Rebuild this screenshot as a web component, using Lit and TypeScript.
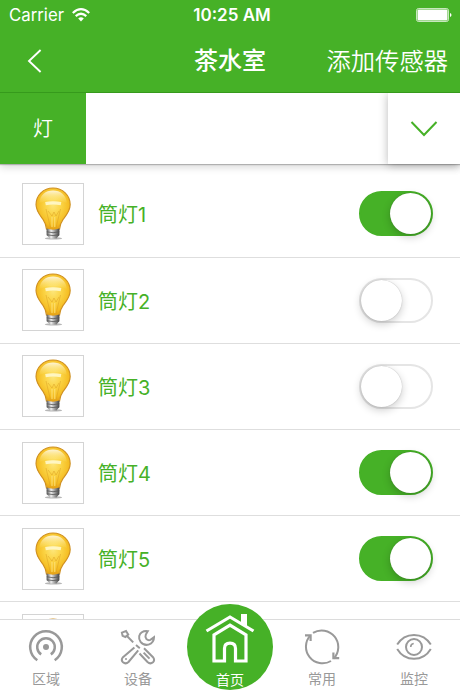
import { LitElement, css, html, svg } from 'lit';
import type { SVGTemplateResult } from 'lit';

interface Lamp {
  name: string;
  on: boolean;
}

interface TabItem {
  label: string;
  icon: SVGTemplateResult;
}

const areaIcon = svg`
  <circle cx="18" cy="18" r="3" fill="currentColor" stroke="none" />
  <path d="M13.2 25.4A8.8 8.8 0 1 1 22.8 25.4" stroke-width="2.5" />
  <path d="M9.3 31.2A15.8 15.8 0 1 1 26.7 31.2" stroke-width="2.5" />
`;

const deviceIcon = svg`
  <path d="M1.9 3.6 6 2 8.2 5.6 5.4 8 2.6 6.8Z" />
  <path d="M7 7 13.2 13.4" />
  <path d="M18.2 21.4 8.5 33Q5.8 35.6 3 33.3 .6 31 3 28.2L14.4 18.4" />
  <circle cx="6" cy="30" r="1" fill="currentColor" stroke="none" />
  <path d="M16 16 19.8 19.2" />
  <path d="M27.8 2.2Q21.2 1.5 19.2 7 18.6 10 20.6 12.8 23.6 16.8 28.6 15.6 34 13.6 34 8.2L30.4 10.8Q28.4 11.8 26.4 10 24.8 8 25.8 5.6Z" />
  <path d="M24 19.2 33 28.2Q35.2 31 33 33.3 30.2 35.6 27.5 33L19.5 24.5" />
  <path d="M23.6 23.6 29.5 29.6" />
`;

const recentIcon = svg`
  <path d="M9 3.9A16.6 16.6 0 0 1 29.6 29.6" />
  <path d="M27 32A16.6 16.6 0 0 1 6.4 6.4" />
  <path d="M1 6.4H6.6V12" stroke-width="2.2" />
  <path d="M29.4 23.6V29.2H35.2" stroke-width="2.2" />
`;

const monitorIcon = svg`
  <path d="M1.2 15.6C5.4 8.6 11.2 5.9 18 5.9S30.6 8.6 34.8 15.6" />
  <path d="M1.2 20C5.4 27 11.2 29.8 18 29.8S30.6 27 34.8 20" />
  <circle cx="18" cy="18" r="8" />
  <path d="M14.7 18Q14.8 14.9 17.7 14.5" stroke-width="1.6" />
`;

export class LampBulbElement extends LitElement {
  public static override styles = css`
    :host {
      display: block;
      box-sizing: border-box;
      width: 62px;
      height: 62px;
      border: 1px solid #d4d4d4;
      background: #fff;
    }

    svg {
      display: block;
      width: 60px;
      height: 60px;
    }
  `;

  public override render() {
    return html`
      <svg viewBox="0 0 60 60">
        <defs>
          <radialGradient id="glass" cx=".5" cy=".4" r=".6">
            <stop offset="0" stop-color="#fde67a" />
            <stop offset=".4" stop-color="#fbd445" />
            <stop offset=".8" stop-color="#f4bb20" />
            <stop offset="1" stop-color="#e09a14" />
          </radialGradient>
          <linearGradient id="shine" x1="0" y1="0" x2="0" y2="1">
            <stop offset="0" stop-color="#fff" stop-opacity=".8" />
            <stop offset="1" stop-color="#ffe76e" stop-opacity=".1" />
          </linearGradient>
          <linearGradient id="cap">
            <stop offset="0" stop-color="#555" />
            <stop offset=".35" stop-color="#eee" />
            <stop offset=".65" stop-color="#999" />
            <stop offset="1" stop-color="#444" />
          </linearGradient>
        </defs>
        <ellipse cx="30.5" cy="54.4" rx="8.6" ry="1.2" fill="#999" opacity=".7" />
        <path
          d="M30 4C20.4 4 13 11.3 13 20.6C13 27 16.8 31 20 35.4C22.6 39.2 23.2 42 23.4 45Q30 47.5 36.6 45C36.8 42 37.4 39.2 40.1 35.4C43.5 31 47.2 27 47.2 20.6C47.2 11.3 39.6 4 30 4Z"
          fill="url(#glass)"
          stroke="#cf9022"
          stroke-width="1.1"
        />
        <path d="M16.4 19C17 11 22.6 6.6 30 6.6S43.2 11 43.8 19Q30 12.5 16.4 19Z" fill="url(#shine)" />
        <path d="M22.5 19.6Q30 18.2 38 19.6" fill="none" stroke="#fffbd8" stroke-width="3.4" opacity=".8" />
        <path
          d="M23 25 27.5 44M37.5 25 33 44M25 27 29 32 31 28 33 32 36 27"
          fill="none"
          stroke="#d99d24"
          stroke-width=".8"
          opacity=".6"
        />
        <path d="M29 33V43M31.8 33V43" fill="none" stroke="#ffe98a" stroke-width=".8" />
        <path d="M23.6 44.6Q30 46.8 36.4 44.6V51.2Q34.7 52.7 33.6 54.4H27Q25.6 52.7 23.6 51.2Z" fill="url(#cap)" />
        <path d="M23.8 47.8Q30 49.6 36.4 47.8M24.2 50.8Q30 52.4 36 50.8" fill="none" stroke="#555" stroke-width=".8" />
      </svg>
    `;
  }
}

export class LampSwitchElement extends LitElement {
  public static override properties = {
    on: { type: Boolean, reflect: true }
  };

  public static override styles = css`
    :host {
      display: flex;
      box-sizing: border-box;
      width: 74px;
      height: 45px;
      border: 2px solid #e5e5e5;
      border-radius: 23px;
      align-items: center;
      justify-content: flex-start;
      background: #fff;
    }

    :host([on]) {
      border-color: #46b127;
      background: #46b127;
      justify-content: flex-end;
    }

    .knob {
      width: 41px;
      height: 41px;
      border-radius: 50%;
      background: #fff;
      box-shadow:
        0 0 1px rgba(0, 0, 0, 0.3),
        0 3px 8px rgba(0, 0, 0, 0.2);
    }
  `;

  declare public on: boolean;

  public override render() {
    return html`<div class="knob"></div>`;
  }
}

export class AppRootElement extends LitElement {
  public static override properties = {
    lamps: { state: true }
  };

  public static override styles = css`
    :host {
      display: flex;
      flex-direction: column;
      position: relative;
      width: 460px;
      height: 690px;
      overflow: hidden;
      background: #fff;
      color: #fff;
      font-family: Inter, 'Noto Sans CJK SC', sans-serif;
      --green: #46b127;
    }

    svg {
      display: block;
      fill: none;
      stroke: currentColor;
    }

    .header {
      flex: none;
      box-sizing: border-box;
      height: 93px;
      border-bottom: 1px solid #369a1c;
      background: var(--green);
    }

    .status {
      display: grid;
      grid-template-columns: 1fr auto 1fr;
      align-items: center;
      height: 30px;
      padding: 0 8px 0 9px;
      line-height: 30px;
    }

    .carrier {
      display: flex;
      align-items: center;
      gap: 8px;
      font-size: 16.8px;
    }

    .time {
      padding-left: 3px;
      font-size: 17px;
      font-weight: 600;
    }

    .battery {
      justify-self: end;
    }

    .nav {
      display: grid;
      grid-template-columns: 1fr auto 1fr;
      align-items: center;
      height: 62px;
      padding: 0 12px;
      line-height: 62px;
    }

    .back {
      margin-left: 15px;
    }

    .title {
      font-size: 24px;
      font-weight: 500;
    }

    .add {
      justify-self: end;
      font-size: 24.3px;
      font-weight: 350;
      white-space: nowrap;
    }

    .strip {
      flex: none;
      display: flex;
      justify-content: space-between;
      height: 71px;
      background: #fff;
      box-shadow: 0 1px 1px rgba(0, 0, 0, 0.22), 0 3px 8px rgba(0, 0, 0, 0.16);
      clip-path: inset(0 0 -16px 0);
      z-index: 1;
    }

    .category {
      width: 86px;
      background: var(--green);
      font-size: 20px;
      font-weight: 350;
      line-height: 72px;
      text-align: center;
    }

    .expand {
      display: flex;
      width: 72px;
      align-items: center;
      justify-content: center;
      color: var(--green);
      background: #fff;
      box-shadow: 0 1px 9px rgba(0, 0, 0, 0.28);
    }

    .list {
      flex: 1;
      min-height: 0;
      padding-top: 7.4px;
      overflow: hidden;
    }

    .row {
      display: flex;
      box-sizing: border-box;
      height: 86.2px;
      padding: 0 27px 0 21.5px;
      align-items: center;
      border-bottom: 1.5px solid #dedede;
    }

    .name {
      flex: 1;
      padding-left: 14.5px;
      color: var(--green);
      font-size: 20px;
    }

    .tabs {
      flex: none;
      display: grid;
      grid-template-columns: repeat(5, 1fr);
      box-sizing: border-box;
      height: 71px;
      border-top: 1px solid #dcdcdc;
      background: #fff;
      color: #999;
      z-index: 2;
    }

    .tab {
      display: flex;
      flex-direction: column;
      align-items: center;
      padding-top: 9px;
      font-size: 14px;
      line-height: 20px;
      gap: 4px;
    }

    .home {
      position: absolute;
      left: 187px;
      bottom: 0;
      display: flex;
      flex-direction: column;
      box-sizing: border-box;
      width: 86px;
      height: 86px;
      padding-top: 9px;
      align-items: center;
      gap: 5px;
      border-radius: 50%;
      background: var(--green);
      color: #fff;
      font-size: 14px;
      line-height: 20px;
      z-index: 3;
    }
  `;

  declare public lamps: Lamp[];

  private readonly leftTabs: TabItem[] = [
    { label: '区域', icon: areaIcon },
    { label: '设备', icon: deviceIcon }
  ];

  private readonly rightTabs: TabItem[] = [
    { label: '常用', icon: recentIcon },
    { label: '监控', icon: monitorIcon }
  ];

  public constructor() {
    super();
    this.lamps = [
      { name: '筒灯1', on: true },
      { name: '筒灯2', on: false },
      { name: '筒灯3', on: false },
      { name: '筒灯4', on: true },
      { name: '筒灯5', on: true },
      { name: '', on: false }
    ];
  }

  public override render() {
    return html`
      <div class="header">
        <div class="status">
          <div class="carrier">
            <span>Carrier</span>
            <svg width="18" height="14" viewBox="0 0 18 14" stroke-width="2.2">
              <path d="M.8 5Q9-2.6 17.2 5" />
              <path d="M3.7 8.1Q9 3.4 14.3 8.1" />
              <path d="M6.2 10.4Q9 8.2 11.8 10.4L9 13.4Z" fill="currentColor" stroke="none" />
            </svg>
          </div>
          <span class="time">10:25 AM</span>
          <svg class="battery" width="36" height="14" viewBox="0 0 36 14">
            <rect x=".5" y=".5" width="32" height="13" rx="2" stroke-opacity=".7" />
            <rect x="1.5" y="1.5" width="30" height="11" rx="1" fill="currentColor" stroke="none" />
            <path d="M34 5Q35.5 5.3 35.5 7T34 9Z" fill="currentColor" stroke="none" />
          </svg>
        </div>
        <div class="nav">
          <svg class="back" width="15" height="24" viewBox="0 0 15 24" stroke-width="1.9">
            <path d="M13.6 1 2 12 13.6 23" />
          </svg>
          <span class="title">茶水室</span>
          <span class="add">添加传感器</span>
        </div>
      </div>
      <div class="strip">
        <div class="category">灯</div>
        <div class="expand">
          <svg width="28" height="16" viewBox="0 0 28 16" stroke-width="2">
            <path d="M1.5 1 14 14 26.5 1" />
          </svg>
        </div>
      </div>
      <div class="list">
        ${this.lamps.map(
          (lamp, index) => html`
            <div class="row">
              <lamp-bulb></lamp-bulb>
              <span class="name">${lamp.name}</span>
              <lamp-switch ?on=${lamp.on} @click=${() => this.toggle(index)}></lamp-switch>
            </div>
          `
        )}
      </div>
      <div class="tabs">
        ${this.leftTabs.map((tab) => this.renderTab(tab))}
        <div></div>
        ${this.rightTabs.map((tab) => this.renderTab(tab))}
      </div>
      <div class="home">
        <svg width="50" height="52" viewBox="0 0 50 52" stroke-width="3.2">
          <path d="M1.5 18 25 4 48.5 18" />
          <path d="M9 48V22L25 12.2 41 22V48H30.5V35.5Q30.5 30.2 25 30.2T19.5 35.5V48Z" />
          <path d="M36 1H42V14.5L36 11Z" fill="currentColor" stroke="none" />
        </svg>
        <span>首页</span>
      </div>
    `;
  }

  private renderTab(tab: TabItem) {
    return html`
      <div class="tab">
        <svg width="36" height="36" viewBox="0 0 36 36" stroke-width="2">${tab.icon}</svg>
        <span>${tab.label}</span>
      </div>
    `;
  }

  private toggle(index: number): void {
    this.lamps = this.lamps.map((lamp, i) => (i === index ? { ...lamp, on: !lamp.on } : lamp));
  }
}

if (!customElements.get('lamp-bulb')) {
  customElements.define('lamp-bulb', LampBulbElement);
}

if (!customElements.get('lamp-switch')) {
  customElements.define('lamp-switch', LampSwitchElement);
}

if (!customElements.get('app-root')) {
  customElements.define('app-root', AppRootElement);
}
